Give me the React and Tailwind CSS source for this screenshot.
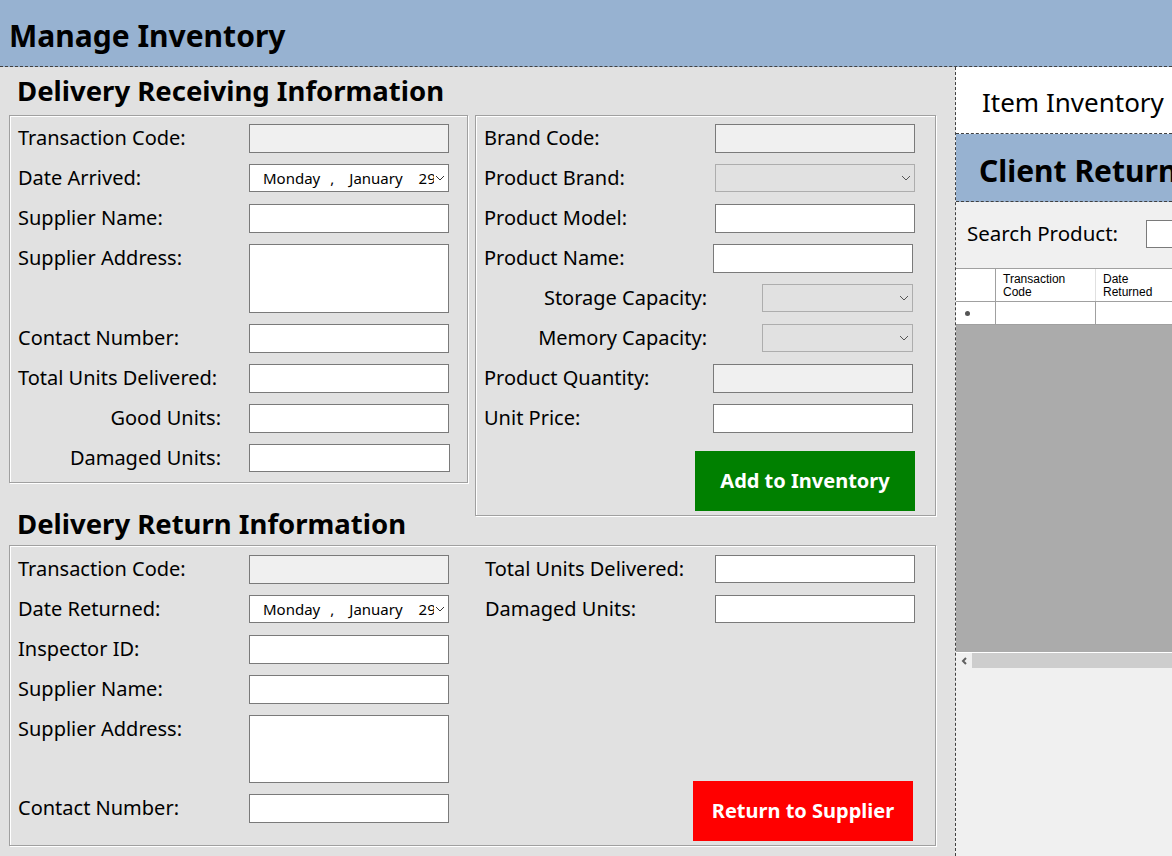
import React from "react";

// Etched WinForms-style group box border
const groupBox =
    "border border-[#a0a0a0] shadow-[inset_1px_1px_0_#ffffff,1px_1px_0_#ffffff]";

const TextBox = ({ w = 200, h = 29, disabled }) => (
    <div
        className={`shrink-0 border border-[#7a7a7a] ${disabled ? "bg-[#f0f0f0]" : "bg-white"}`}
        style={{ width: w, height: h }}
    />
);

const Chevron = ({ color = "#333" }) => (
    <svg width="10" height="6" viewBox="0 0 10 6" className="shrink-0">
        <polyline points="1,1 5,5 9,1" fill="none" stroke={color} strokeWidth="1" />
    </svg>
);

const ComboBox = ({ w = 200 }) => (
    <div
        className="shrink-0 h-[28px] border border-[#adadad] bg-[#e1e1e1] flex items-center justify-end pr-[3px]"
        style={{ width: w }}
    >
        <Chevron color="#555" />
    </div>
);

const DatePicker = () => (
    <div className="shrink-0 w-[200px] h-[28px] border border-[#7a7a7a] bg-white flex items-center text-[15px] pl-[13px] pr-[3px]">
        <div className="w-[171px] overflow-hidden whitespace-nowrap flex items-center">
            <span>Monday</span>
            <span className="ml-[10px]">,</span>
            <span className="ml-[15px]">January</span>
            <span className="ml-[16px]">29</span>
        </div>
        <div className="flex-1" />
        <Chevron />
    </div>
);

const Row = ({ label, labelW = 231, right, gap = 0, children }) => (
    <div className="flex items-start">
        <div
            className={`shrink-0 h-[29px] leading-[28px] whitespace-nowrap ${right ? "text-right" : ""}`}
            style={{ width: labelW, marginRight: gap }}
        >
            {label}
        </div>
        {children}
    </div>
);

const SectionTitle = ({ children, className = "" }) => (
    <div className={`pl-[17px] text-[27.5px] font-bold whitespace-nowrap ${className}`}>
        {children}
    </div>
);

const ReceivingBox = () => (
    <div className={`ml-[9px] w-[459px] h-[368px] pl-[8px] pt-[8px] flex flex-col gap-[11px] ${groupBox}`}>
        <Row label="Transaction Code:">
            <TextBox disabled />
        </Row>
        <Row label="Date Arrived:">
            <DatePicker />
        </Row>
        <Row label="Supplier Name:">
            <TextBox />
        </Row>
        <Row label="Supplier Address:">
            <TextBox h={69} />
        </Row>
        <Row label="Contact Number:">
            <TextBox />
        </Row>
        <Row label="Total Units Delivered:">
            <TextBox />
        </Row>
        <Row label="Good Units:" labelW={203} right gap={28}>
            <TextBox />
        </Row>
        <Row label="Damaged Units:" labelW={203} right gap={28}>
            <TextBox w={201} h={28} />
        </Row>
    </div>
);

const ProductBox = () => (
    <div className={`w-[461px] h-[401px] pl-[8px] pt-[8px] pr-[19px] flex flex-col gap-[11px] ${groupBox}`}>
        <Row label="Brand Code:">
            <TextBox disabled />
        </Row>
        <Row label="Product Brand:">
            <ComboBox />
        </Row>
        <Row label="Product Model:">
            <TextBox />
        </Row>
        <Row label="Product Name:" labelW={229}>
            <TextBox />
        </Row>
        <Row label="Storage Capacity:" labelW={223} right gap={55}>
            <ComboBox w={151} />
        </Row>
        <Row label="Memory Capacity:" labelW={223} right gap={55}>
            <ComboBox w={151} />
        </Row>
        <Row label="Product Quantity:" labelW={229}>
            <TextBox disabled />
        </Row>
        <Row label="Unit Price:" labelW={229}>
            <TextBox />
        </Row>
        <div className="flex justify-end mt-[7px]">
            <button
                type="button"
                className="w-[220px] h-[60px] bg-[#008000] text-white font-bold text-[20px] mr-[1px]"
            >
                Add to Inventory
            </button>
        </div>
    </div>
);

const ReturnBox = () => (
    <div className={`ml-[9px] w-[927px] h-[301px] pl-[8px] pt-[9px] pr-[19px] pb-[4px] flex gap-[36px] ${groupBox}`}>
        <div className="w-[431px] flex flex-col gap-[11px]">
            <Row label="Transaction Code:">
                <TextBox disabled />
            </Row>
            <Row label="Date Returned:">
                <DatePicker />
            </Row>
            <Row label="Inspector ID:">
                <TextBox />
            </Row>
            <Row label="Supplier Name:">
                <TextBox />
            </Row>
            <Row label="Supplier Address:">
                <TextBox h={68} />
            </Row>
            <Row label="Contact Number:">
                <TextBox />
            </Row>
        </div>
        <div className="flex-1 flex flex-col">
            <div className="flex flex-col gap-[11px]">
                <Row label="Total Units Delivered:" labelW={230}>
                    <TextBox h={28} />
                </Row>
                <Row label="Damaged Units:" labelW={230}>
                    <TextBox h={28} />
                </Row>
            </div>
            <div className="mt-auto flex justify-end pr-[3px]">
                <button
                    type="button"
                    className="w-[220px] h-[60px] bg-[#ff0000] text-white font-bold text-[20px]"
                >
                    Return to Supplier
                </button>
            </div>
        </div>
    </div>
);

const ClientReturnPanel = () => (
    <div className="flex-1 min-w-0 flex flex-col bg-[#f0f0f0] border-l border-dashed border-[#404040] overflow-hidden">
        {/* Item Inventory tab */}
        <div className="h-[67px] shrink-0 bg-white border-b border-dashed border-[#404040] flex items-center pl-[26px] pt-[4px] text-[26px] whitespace-nowrap">
            Item Inventory
        </div>
        {/* Client Return header */}
        <div className="h-[68px] shrink-0 bg-[#97b2d1] border-b border-dashed border-[#404040] flex items-center pl-[23px] pt-[5px] text-[30px] font-bold whitespace-nowrap">
            Client Return
        </div>
        {/* Search */}
        <div className="h-[66px] shrink-0 flex items-center pl-[11px] pb-[3px] whitespace-nowrap">
            <span className="text-[20.5px]">Search Product:</span>
            <div className="ml-[28px] w-[150px] h-[28px] shrink-0 border border-[#7a7a7a] bg-white" />
        </div>
        {/* Grid */}
        <div className="h-[400px] shrink-0 flex flex-col border-t border-[#a0a0a0] bg-[#ababab]">
            <div className="h-[33px] shrink-0 flex bg-white border-b border-[#a0a0a0] text-[12px] leading-[13px] font-['Liberation_Sans',sans-serif]">
                <div className="w-[40px] shrink-0 border-r border-[#a0a0a0]" />
                <div className="w-[100px] shrink-0 border-r border-[#e0e0e0] pl-[7px] pt-[4px]">
                    Transaction
                    <br />
                    Code
                </div>
                <div className="w-[100px] shrink-0 pl-[7px] pt-[4px]">
                    Date
                    <br />
                    Returned
                </div>
            </div>
            <div className="h-[23px] shrink-0 flex bg-white border-b border-[#a0a0a0]">
                <div className="w-[40px] shrink-0 border-r border-[#a0a0a0] flex items-center pl-[9px]">
                    <div className="w-[5px] h-[5px] rounded-full bg-[#555]" />
                </div>
                <div className="w-[100px] shrink-0 border-r border-[#a0a0a0]" />
                <div className="w-[100px] shrink-0" />
            </div>
            <div className="flex-1" />
            {/* horizontal scrollbar */}
            <div className="h-[16px] shrink-0 flex border-t border-white">
                <div className="w-[16px] shrink-0 bg-[#f0f0f0] flex items-center justify-center">
                    <svg width="7" height="8" viewBox="0 0 7 8">
                        <polyline points="5,1 2,4 5,7" fill="none" stroke="#606060" strokeWidth="2" />
                    </svg>
                </div>
                <div className="flex-1 bg-[#cdcdcd]" />
            </div>
        </div>
        <div className="flex-1" />
    </div>
);

const App = () => {
    return (
        <div className="w-[1172px] h-[856px] overflow-hidden flex flex-col text-black font-['Noto_Sans',sans-serif] text-[20px]">
            {/* Title bar */}
            <div className="h-[67px] shrink-0 bg-[#97b2d1] border-b border-dashed border-[#404040] flex items-center pl-[9px] pt-[5px] text-[30px] font-bold">
                Manage Inventory
            </div>
            <div className="flex-1 flex min-h-0">
                {/* Left form area */}
                <div className="w-[955px] shrink-0 bg-[#e1e1e1] flex flex-col">
                    <SectionTitle className="h-[48px] flex items-center">
                        Delivery Receiving Information
                    </SectionTitle>
                    <div className="flex items-start gap-[7px]">
                        <ReceivingBox />
                        <ProductBox />
                    </div>
                    <SectionTitle className="h-[29px] flex items-center -mt-[7px] mb-[7px]">
                        Delivery Return Information
                    </SectionTitle>
                    <ReturnBox />
                </div>
                <ClientReturnPanel />
            </div>
        </div>
    );
};

export default App;
